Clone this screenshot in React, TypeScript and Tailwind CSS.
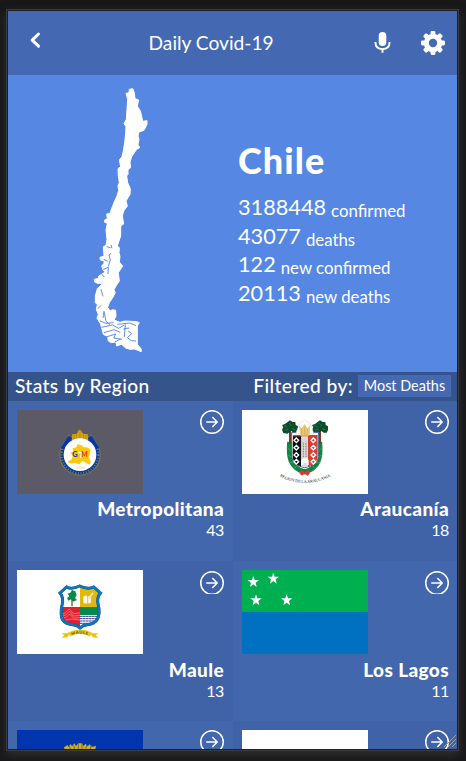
import React from 'react';
import { BsArrowRightCircle } from 'react-icons/bs';

function Star({ x, y }: { x: number; y: number }) {
  return (
    <path
      transform={`translate(${x} ${y})`}
      fill="#fff"
      d="M0-18 4-6H17L7 2 10 15 0 7-10 15-7 2-17-6H-4Z"
    />
  );
}

function MetropolitanaFlag() {
  return (
    <svg viewBox="51 135 378 252" className="h-[84px] w-[126px] bg-[#5b5a66]">
      <path d="M205 210 211 224 222 216M275 210 269 224 258 216" stroke="#968a45" strokeWidth="3" fill="none" />
      <circle cx="240" cy="270" r="62" fill="#837c4a" />
      <circle cx="240" cy="270" r="59" fill="#0a3a9c" />
      <circle cx="240" cy="270" r="55" fill="none" stroke="#c3b34e" strokeWidth="6" strokeDasharray="3 5" pathLength="340" opacity=".6" />
      <path d="M182 248 206 212 222 224 196 252ZM298 248 274 212 258 224 284 252Z" fill="#0735a8" />
      <path d="M215 225 217 207 228 207 233 203 234 198 239 194 244 198 246 203 252 207 263 207 265 225 240 230Z" fill="#d6a40c" />
      <path d="M222 208V223M230 207V223M240 199V225M250 207V223M258 208V223" stroke="#a87e0b" strokeWidth="2" />
      <circle cx="240" cy="269" r="49" fill="#fff" />
      <path d="M218 250 229 247 232 238 244 240 251 247 262 247 272 254 270 267 266 276 272 290 269 299 256 293 248 287 238 298 224 293 214 296 202 291 215 283 218 273 211 263 220 260Z" fill="#fdc90d" />
      <path d="M235 263H246L241 278" stroke="#fff" strokeWidth="4" fill="none" />
      <text x="217" y="277" fontSize="22" fontWeight="900" fill="#183c89" className="font-[Lato]">G</text>
      <text x="244" y="277" fontSize="20" fontWeight="900" fill="#e33021" className="font-[Lato]">M</text>
      <path d="M229 308H255" stroke="#f1dfa0" strokeWidth="6" strokeDasharray="4 2" />
    </svg>
  );
}

function Diamond({ x, y }: { x: number; y: number }) {
  return <path transform={`translate(${x} ${y})`} d="M0-7 7 0 0 7-7 0Z" fill="none" stroke="#fff" strokeWidth="4" />;
}

function Tree({ x }: { x: number }) {
  return (
    <g transform={`translate(${x} 0)`}>
      <path d="M0 187V236" stroke="#783d22" strokeWidth="6" />
      <path d="M-8 172 0 166 8 171 16 171 17 180 24 184 24 195 20 203 11 203 4 198-8 206-20 204-24 194-20 187-24 180-15 177Z" fill="#07502c" />
      <path d="M-17 181-8 187M-3 174 5 183M6 191 16 194M-14 195-5 194" stroke="#53633f" strokeWidth="3" />
    </g>
  );
}

function AraucaniaFlag() {
  return (
    <svg viewBox="27 135 378 252" className="h-[84px] w-[126px] bg-white">
      <defs><path id="ribbon" d="M140 334Q213 374 294 334" /></defs>
      <path d="M170 231C166 277 171 308 215 321C259 308 264 277 260 231" fill="none" stroke="#128342" strokeWidth="15" />
      <path d="M164 249 174 258M163 270 176 276M170 293 183 291M184 311 192 301M267 249 256 258M268 270 255 276M261 293 248 291M246 311 238 301" stroke="#36a25d" strokeWidth="3" />
      <Tree x={171} />
      <Tree x={261} />
      <path d="M176 202H257V275Q254 301 215 308Q178 301 176 275Z" fill="#fff" stroke="#315d94" strokeWidth="3" />
      <path d="M180 210H205V304Q181 300 179 275Z" fill="#111" />
      <path d="M225 210H254V275Q252 299 225 304Z" fill="#d63e32" />
      <path d="M205 215H225V305H205Z" fill="#d8d8d8" />
      <path d="M211 233V276M219 233V276" stroke="#777" strokeWidth="3" strokeDasharray="3 2" />
      <path d="M204 300V285L210 280H221L227 285V300H220V294H211V300Z" fill="#fff" />
      <path d="M180 212H252" stroke="#d63e32" strokeWidth="4" />
      <path d="M188 207 200 175 215 165 233 176 242 207Z" fill="#fff" stroke="#ddd" strokeWidth="2" />
      <path d="M198 181 206 190 215 177 223 190 232 181 229 212H202Z" fill="#e8cc73" />
      <path d="M206 191V211M215 185V211M223 191V211" stroke="#c4a754" strokeWidth="2" />
      {[226, 248, 270, 290].map((y) => <Diamond key={`a${y}`} x={190} y={y} />)}
      {[226, 248, 270, 290].map((y) => <Diamond key={`b${y}`} x={241} y={y} />)}
      <path d="M215 322 203 314 199 325 207 332 215 325 224 333 231 324 226 314Z" fill="#d63e32" />
      <text fontSize="12.5" fill="#222" className="font-['Liberation_Serif']">
        <textPath href="#ribbon" textLength="160">REGION DE LA ARAUCANIA</textPath>
      </text>
    </svg>
  );
}

function MauleFlag() {
  const outline = 'M180 114 200 96Q214 105 239 93Q264 105 281 96L301 114Q289 129 295 151Q301 175 292 193Q284 207 262 209Q247 211 240 219Q233 211 218 209Q196 207 187 193Q180 178 186 151Q192 128 180 114Z';
  return (
    <svg viewBox="51 45 378 252" className="h-[84px] w-[126px] bg-white">
      <defs><clipPath id="shield"><path d={outline} /></clipPath></defs>
      <g clipPath="url(#shield)">
        <path d="M175 90H240V156H175Z" fill="#fff" />
        <path d="M240 90H304V156H240Z" fill="#e1b90e" />
        <path d="M175 156H240V220H175Z" fill="#e51e2e" />
        <path d="M240 156H304V181H240Z" fill="#08884d" />
        <path d="M240 181H304V220H240Z" fill="#fff" />
        <path d="M240 184H304M240 191H304M240 198H304M240 205H304" stroke="#263a87" strokeWidth="3" strokeDasharray="8 1" />
        <path d="M186 178 196 173 208 162 220 176 240 174M186 184 197 180 208 169 220 183 240 181M186 191 199 187 209 177 220 189 240 188M187 198 211 192 240 195" fill="none" stroke="#f69b9e" strokeWidth="2" />
        <path d="M216 132V154" stroke="#84512d" strokeWidth="4" />
        <path d="M216 105 226 109 230 121 225 129 231 135 219 140 213 133 204 137 202 128 208 124 203 116 211 113Z" fill="#08884d" />
        <path d="M249 123 259 120 263 124 274 119V145L263 147 249 146ZM263 123V147" fill="#fffbe4" stroke="#d1a711" strokeWidth="2" />
        <path d="M266 132 279 113" stroke="#e9e4c6" strokeWidth="5" />
      </g>
      <path d={outline} fill="none" stroke="#174b80" strokeWidth="9" />
      <path d={outline} fill="none" stroke="#0878c3" strokeWidth="7" />
      <path d="M184 235 209 235 202 247 185 248 193 241ZM296 235 271 235 278 247 295 248 287 241Z" fill="#edbf11" />
      <path d="M207 239Q240 221 273 239" fill="none" stroke="#efc516" strokeWidth="13" />
      <defs><path id="mauleText" d="M216 242Q240 229 267 242" /></defs>
      <text fontSize="12" fontWeight="700" fill="#5a4b10" className="font-[Lato]">
        <textPath href="#mauleText" textLength="48">MAULE</textPath>
      </text>
    </svg>
  );
}

function LosLagosFlag() {
  return (
    <svg viewBox="27 45 378 252" className="h-[84px] w-[126px] bg-[#0070c0]">
      <path d="M27 45H405V171H27Z" fill="#00b050" />
      <Star x={61} y={81} />
      <Star x={121} y={71} />
      <Star x={69} y={136} />
      <Star x={161} y={136} />
    </svg>
  );
}

function CastleFlag() {
  return (
    <svg viewBox="51 525 378 252" className="h-[84px] w-[126px] bg-[#0035ad]">
      <path d="M192 577 203 570 205 576 212 567 216 574 223 565 228 573 235 565H245L251 573 257 566 263 574 269 568 275 576 288 572 284 592H197Z" fill="#d5ad22" />
      <path d="M208 572 212 585M221 570 224 585M235 565V585M246 565V585M260 570 257 585M274 572 270 585" stroke="#6d6b45" strokeWidth="3" />
    </svg>
  );
}

function ChileMap() {
  return (
    <svg viewBox="0 0 270 840" className="h-[280px] w-[90px]" fill="#fff">
      <path
        stroke="#fff"
        strokeWidth="3"
        strokeLinejoin="round"
        d="M148 28 147 38 138 40 143 58 141 88 139 118 132 131 138 140 137 158 134 188 130 213 126 230 118 240 122 260 114 266 115 288 118 308 114 318 116 331 111 348 104 363 97 380 90 400 80 402 82 416 74 420 74 427 82 430 78 450 81 478 78 496 70 500 72 528 60 532 61 540 72 542 72 550 65 558 69 570 76 576 56 588 56 595 43 598 44 606 53 610 69 610 52 626 46 648 46 668 52 674 49 688 55 704 51 714 62 733 70 763 83 770 85 783 94 788 108 786 110 798 124 793 137 804 150 808 163 807 184 815 183 806 172 793V738L178 728 170 725 135 723 120 727 102 720 108 708 107 691 97 689 90 693 83 682 88 668 98 653 106 638 102 629 108 618 118 603 115 578 128 558 118 546 120 530 117 518 118 503 112 498 122 468 122 438 131 432 127 408 131 393 142 378 138 363 150 343 151 326 143 308 140 288 144 283 144 269 152 263 150 248 155 230 170 208 179 203 174 193 177 178 174 168 177 156 192 151 201 133 201 122 188 124 185 109 181 93 172 78 176 60 165 56 163 38 158 26Z"
      />
      <path
        fill="none"
        stroke="#5687e3"
        strokeWidth="2.8"
        d="M93 495 96 505M93 520 87 525 91 540 85 559M80 500 92 503M71 538 84 544M70 569 85 561 84 582M66 583 73 591M63 628 69 649M53 686 64 676M69 714 72 694 78 724 90 734M59 722 78 730 101 728M64 742 97 735 116 745 133 735M72 758 102 749 121 757M78 771 107 762 101 774 126 778M104 786 122 777M133 750 132 746 148 744M136 733 133 771M145 753 155 761 142 773 154 782 168 783M112 733 149 729 168 737"
      />
    </svg>
  );
}

interface RegionProps {
  name?: string;
  deaths?: number;
  dark?: boolean;
  low?: boolean;
  right?: boolean;
  flag: React.ReactNode;
}

function Region({ name, deaths, dark, low, right, flag }: RegionProps) {
  return (
    <div className={`flex h-40 flex-col pt-[9px] pl-[9px] ${right ? 'pr-2' : 'pr-[9px]'} ${dark ? 'bg-[#4062a6]' : 'bg-[#4267ad]'}`}>
      <div className="flex h-[84px] shrink-0 items-start justify-between">
        {flag}
        <div className={low ? 'mt-px h-[23px] overflow-hidden' : ''}>
          <BsArrowRightCircle size={24} />
        </div>
      </div>
      <div className={`flex flex-col items-end font-[Lato] ${low ? 'mt-[5px]' : 'mt-1'}`}>
        <div className="text-[19px] leading-[22px] font-black tracking-[0.38px]">{name}</div>
        <div className="text-base leading-5 tracking-[-0.4px]">{deaths}</div>
      </div>
    </div>
  );
}

function Stat({ value, label }: { value: string; label: string }) {
  return (
    <div className="flex h-[28.6px] items-baseline gap-[5px] whitespace-nowrap">
      <span className="text-[21.7px] leading-7">{value}</span>
      <span className="relative top-[2px] text-[16.8px] leading-5">{label}</span>
    </div>
  );
}

export default function App() {
  return (
    <div className="h-[761px] w-[466px] overflow-hidden bg-[#18181a] pt-[9px] pl-[6px] font-[Lato,sans-serif] text-white">
      <div className="h-[742px] w-[453px] border border-[#3c3c3d] bg-[#202024] pt-px pl-px shadow-[0_4px_9px_0px_#303030]">
        <div className="relative flex h-[738px] w-[449px] flex-col overflow-hidden">
          <header className="flex h-16 shrink-0 items-center bg-[#4469b2]">
            <svg viewBox="0 0 450 64" className="absolute h-16 w-[450px]" fill="#fff">
              <path d="M30.5 23 24.2 29.1 30.5 35.2" fill="none" stroke="#fff" strokeWidth="3" strokeLinecap="round" strokeLinejoin="round" />
              <rect x="370.7" y="21" width="7.6" height="14" rx="3.8" />
              <path d="M367.4 31Q367.4 38.1 374.5 38.1T381.6 31M374.5 38V41.8" fill="none" stroke="#fff" strokeWidth="1.9" />
              <g transform="translate(425 32)">
                <circle r="6.7" fill="none" stroke="#fff" strokeWidth="5" />
                {[0, 45, 90, 135].map((angle) => (
                  <g key={angle} transform={`rotate(${angle})`}>
                    <rect x="-2.4" y="-12" width="4.8" height="5" rx="1.4" />
                    <rect x="-2.4" y="7" width="4.8" height="5" rx="1.4" />
                  </g>
                ))}
              </g>
            </svg>
            <h1 className="ml-[140.5px] text-[19.2px]">Daily Covid-19</h1>
          </header>
          <section className="flex h-[297px] shrink-0 bg-[#5687e3] pt-[5px] pl-[72px]">
            <ChileMap />
            <div className="ml-[68px] pt-[57px]">
              <h2 className="text-[36px] leading-[46px] font-black tracking-[1.1px]">Chile</h2>
              <div className="mt-[10px]">
                <Stat value="3188448" label="confirmed" />
                <Stat value="43077" label="deaths" />
                <Stat value="122" label="new confirmed" />
                <Stat value="20113" label="new deaths" />
              </div>
            </div>
          </section>
          <div className="flex h-[29px] shrink-0 items-center bg-[#35548b] pr-[6px] pl-[7px] text-[19.2px] font-medium">
            <span className="tracking-[0.35px]">Stats by Region</span>
            <span className="ml-auto tracking-[0.4px]">Filtered by:</span>
            <span className="mb-px ml-[5px] flex h-[22px] w-[93px] items-center justify-center bg-[#4469b2] text-[14.4px] font-normal">Most Deaths</span>
          </div>
          <main className="grid shrink-0 grid-cols-[225px_224px]">
            <Region name="Metropolitana" deaths={43} flag={<MetropolitanaFlag />} />
            <Region name="Araucanía" deaths={18} dark right flag={<AraucaniaFlag />} />
            <Region name="Maule" deaths={13} dark low flag={<MauleFlag />} />
            <Region name="Los Lagos" deaths={11} low right flag={<LosLagosFlag />} />
            <Region flag={<CastleFlag />} />
            <Region dark right flag={<div className="h-[84px] w-[126px] bg-white" />} />
          </main>
          <svg viewBox="0 0 14 14" className="absolute right-0 bottom-0 h-[14px] w-[14px]" stroke="#aaa69f" strokeWidth="1">
            <path d="M1 12 13 0M5 12 13 4M9 12 13 8" />
          </svg>
        </div>
      </div>
    </div>
  );
}
